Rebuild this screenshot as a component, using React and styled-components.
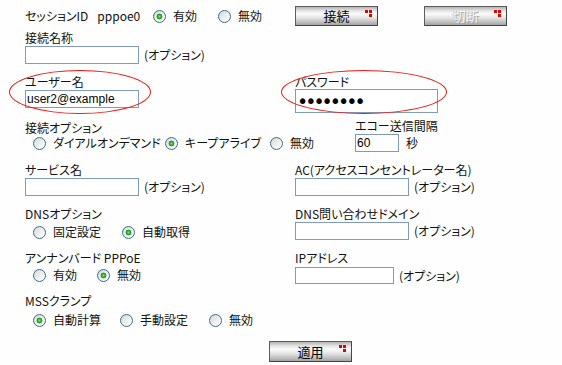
import styled, { createGlobalStyle } from 'styled-components';

const GlobalStyle = createGlobalStyle`
  body {
    margin: 0;
    background: #fdfefd;
    color: #111;
    font-family: "Noto Sans CJK JP", "Liberation Sans", sans-serif;
    font-size: 12px;
    font-feature-settings: "palt";
  }
`;

const Radio = ({ name, label, checked, w }) => (
  <Option $w={w}>
    <RadioInput type="radio" name={name} defaultChecked={checked} />
    {label}
  </Option>
);

const App = () => {
  return (
    <Page>
      <GlobalStyle />

      <Row $h={20}>
        <SessionInfo>
          <Plain>セッションID</Plain>
          <Plain>pppoe0</Plain>
        </SessionInfo>
        <RadioGroup>
          <Radio name="session" label="有効" checked w={65} />
          <Radio name="session" label="無効" w={77} />
        </RadioGroup>
        <ButtonBar>
          <Button>
            接続
            <Marker />
          </Button>
          <Button $off disabled>
            切断
            <Marker />
          </Button>
        </ButtonBar>
      </Row>

      <Row $top={5}>
        <Field>
          <Label>接続名称</Label>
          <InputLine>
            <TextBox $w={114} />
            <Hint>(オプション)</Hint>
          </InputLine>
        </Field>
      </Row>

      <Row $top={11}>
        <Field $w={270}>
          <Ellipse $left={-16} $w={142} />
          <Label>ユーザー名</Label>
          <InputLine>
            <TextBox $w={114} defaultValue="user2@example" />
          </InputLine>
        </Field>
        <Field>
          <Ellipse $left={-14} $w={166} />
          <Label>パスワード</Label>
          <InputLine $top={0}>
            <PassBox type="password" defaultValue="password" />
          </InputLine>
        </Field>
      </Row>

      <Row $top={8}>
        <Field $w={330}>
          <Label>接続オプション</Label>
          <RadioGroup $indent={8} $top={0}>
            <Radio name="conn" label="ダイアルオンデマンド" w={132} />
            <Radio name="conn" label="キープアライブ" checked w={105} />
            <Radio name="conn" label="無効" />
          </RadioGroup>
        </Field>
        <Field $top={-2}>
          <Label>エコー送信間隔</Label>
          <InputLine>
            <TextBox $w={44} defaultValue="60" />
            <Hint $gap={7}>秒</Hint>
          </InputLine>
        </Field>
      </Row>

      <Row $top={11}>
        <Field $w={270}>
          <Label>サービス名</Label>
          <InputLine>
            <TextBox $w={114} />
            <Hint>(オプション)</Hint>
          </InputLine>
        </Field>
        <Field>
          <Label>AC(アクセスコンセントレーター名)</Label>
          <InputLine>
            <TextBox $w={114} />
            <Hint>(オプション)</Hint>
          </InputLine>
        </Field>
      </Row>

      <Row $top={11}>
        <Field $w={270}>
          <Label>DNSオプション</Label>
          <RadioGroup $indent={8} $top={3}>
            <Radio name="dns" label="固定設定" w={89} />
            <Radio name="dns" label="自動取得" checked />
          </RadioGroup>
        </Field>
        <Field>
          <Label>DNS問い合わせドメイン</Label>
          <InputLine>
            <TextBox $w={114} />
            <Hint>(オプション)</Hint>
          </InputLine>
        </Field>
      </Row>

      <Row $top={11}>
        <Field $w={270}>
          <Label>アンナンバード PPPoE</Label>
          <RadioGroup $indent={8} $top={2}>
            <Radio name="unnum" label="有効" w={64} />
            <Radio name="unnum" label="無効" checked />
          </RadioGroup>
        </Field>
        <Field>
          <Label>IPアドレス</Label>
          <InputLine $top={2}>
            <TextBox $w={99} $h={17} />
            <Hint>(オプション)</Hint>
          </InputLine>
        </Field>
      </Row>

      <Row $top={10}>
        <Field>
          <Label>MSSクランプ</Label>
          <RadioGroup $indent={8} $top={4}>
            <Radio name="mss" label="自動計算" checked w={87} />
            <Radio name="mss" label="手動設定" w={89} />
            <Radio name="mss" label="無効" />
          </RadioGroup>
        </Field>
      </Row>

      <Footer>
        <Button $h={21}>
          適用
          <Marker />
        </Button>
      </Footer>
    </Page>
  );
};

const Page = styled.div`
  width: 562px;
  height: 365px;
  box-sizing: border-box;
  padding: 6px 0 0 25px;
  overflow: hidden;
`;

const Row = styled.div`
  display: flex;
  align-items: ${(p) => (p.$h ? 'center' : 'flex-start')};
  height: ${(p) => (p.$h ? `${p.$h}px` : 'auto')};
  margin-top: ${(p) => p.$top || 0}px;
`;

const SessionInfo = styled.div`
  display: flex;
  gap: 9px;
  width: 128px;
  flex-shrink: 0;
`;

const Plain = styled.span`
  line-height: 14px;
  white-space: nowrap;
`;

const Field = styled.div`
  position: relative;
  display: flex;
  flex-direction: column;
  width: ${(p) => (p.$w ? `${p.$w}px` : 'auto')};
  flex-shrink: 0;
  margin-top: ${(p) => p.$top || 0}px;
`;

const Label = styled.div`
  line-height: 14px;
  height: 14px;
  white-space: nowrap;
`;

const InputLine = styled.div`
  display: flex;
  align-items: center;
  margin-top: ${(p) => (p.$top === undefined ? 1 : p.$top)}px;
`;

const TextBox = styled.input`
  box-sizing: border-box;
  width: ${(p) => p.$w}px;
  height: ${(p) => p.$h || 18}px;
  margin: 0;
  padding: 0 1px;
  border: 1px solid #7f9db9;
  background: #fff;
  color: #000;
  font-family: "Liberation Sans", sans-serif;
  font-size: 12px;
  outline: none;
`;

const PassBox = styled(TextBox)`
  width: 143px;
  height: 24px;
  padding: 0 0 0 1px;
  font-family: "DejaVu Sans", sans-serif;
  font-size: 19px;
  letter-spacing: -3px;
`;

const Hint = styled.span`
  margin-left: ${(p) => p.$gap || 5}px;
  line-height: 14px;
  white-space: nowrap;
`;

const RadioGroup = styled.div`
  display: flex;
  align-items: center;
  height: 16px;
  margin-left: ${(p) => p.$indent || 0}px;
  margin-top: ${(p) => p.$top || 0}px;
`;

const Option = styled.label`
  display: flex;
  align-items: center;
  width: ${(p) => (p.$w ? `${p.$w}px` : 'auto')};
  flex-shrink: 0;
  line-height: 14px;
  white-space: nowrap;
`;

const RadioInput = styled.input`
  appearance: none;
  box-sizing: border-box;
  width: 13px;
  height: 13px;
  margin: 0 7px 0 0;
  border: 1px solid #3a6b98;
  border-radius: 50%;
  background: linear-gradient(135deg, #d6d6cf 0%, #ececE7 45%, #ffffff 100%);
  flex-shrink: 0;

  &:checked {
    background: radial-gradient(circle at 50% 50%, #7fe07f 0, #22a822 2px, #1b8f1b 2.6px, transparent 3.2px),
      linear-gradient(135deg, #d6d6cf 0%, #ececE7 45%, #ffffff 100%);
  }
`;

const ButtonBar = styled.div`
  display: flex;
  gap: 46px;
`;

const Button = styled.button`
  position: relative;
  box-sizing: border-box;
  width: 83px;
  height: ${(p) => p.$h || 20}px;
  margin: 0;
  padding: 0;
  border: 1px solid #5c5c5c;
  border-right-color: #444;
  border-bottom-color: #444;
  background: linear-gradient(
    to bottom,
    #b4b4b4 0%,
    #e6e6e6 22%,
    #fbfbfb 38%,
    #e2e2e2 62%,
    #bdbdbd 85%,
    #a4a4a4 100%
  );
  color: ${(p) => (p.$off ? '#f6f6f6' : '#000')};
  text-shadow: ${(p) => (p.$off ? '1px 1px 0 #a5a5a5, -1px 0 0 #c9c9c9' : 'none')};
  font-family: "Noto Sans CJK JP", sans-serif;
  font-size: 13px;
  line-height: 16px;
  cursor: pointer;
`;

const Marker = styled.span`
  position: absolute;
  top: 3px;
  right: 5px;
  width: 3px;
  height: 3px;
  background: #e00000;
  box-shadow: -4px 0 0 #e00000, 0 4px 0 #e00000;
`;

const Ellipse = styled.span`
  position: absolute;
  left: ${(p) => p.$left}px;
  top: -5px;
  width: ${(p) => p.$w}px;
  height: 44px;
  box-sizing: border-box;
  border: 1px solid #f01818;
  border-radius: 50%;
  pointer-events: none;
`;

const Footer = styled.div`
  display: flex;
  margin: 13px 0 0 244px;
`;

export default App;
